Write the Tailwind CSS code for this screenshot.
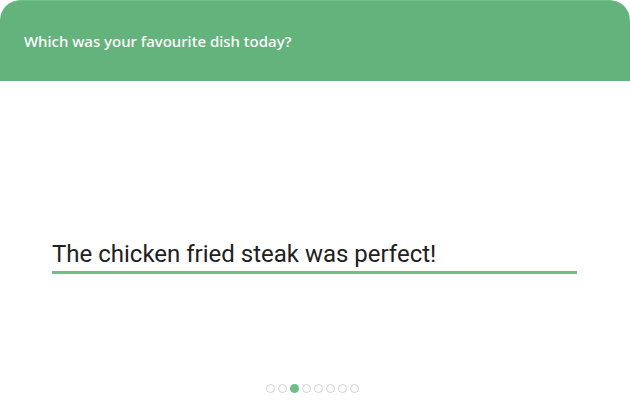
<!DOCTYPE html>
<html lang="en">
<head>
<meta charset="utf-8">
<meta name="viewport" content="width=device-width, initial-scale=1">
<title>Survey</title>
<script src="https://cdn.jsdelivr.net/npm/@tailwindcss/browser@4"></script>
</head>
<body class="bg-white">
<main class="flex min-h-screen flex-col overflow-hidden rounded-t-[20px] bg-white">
  <header class="rounded-t-[20px] border-t border-[#6fc088] bg-[#65b37c] px-6 py-[26px]">
    <h1 class="font-['Noto_Sans',sans-serif] text-[15px] leading-7 font-medium text-white"><label for="dish">Which was your favourite dish today?</label></h1>
  </header>
  <form class="flex flex-1 flex-col pt-[156px] pr-[53px] pl-[52px]">
    <input id="dish" type="text" value="The chicken fried steak was perfect!" class="h-[37px] w-full border-b-3 border-[#6fc088] font-[Roboto,sans-serif] text-[24px] leading-8 text-[#212121] outline-none">
  </form>
  <nav aria-label="Question progress" class="flex justify-center gap-[3px] pr-1.5 pb-[10px]">
    <a href="#q1" aria-label="Question 1" class="size-[9px] rounded-full border border-[#d2d2d2]"></a>
    <a href="#q2" aria-label="Question 2" class="size-[9px] rounded-full border border-[#d2d2d2]"></a>
    <a href="#q3" aria-label="Question 3" aria-current="step" class="size-[9px] rounded-full bg-[#6cc087]"></a>
    <a href="#q4" aria-label="Question 4" class="size-[9px] rounded-full border border-[#d2d2d2]"></a>
    <a href="#q5" aria-label="Question 5" class="size-[9px] rounded-full border border-[#d2d2d2]"></a>
    <a href="#q6" aria-label="Question 6" class="size-[9px] rounded-full border border-[#d2d2d2]"></a>
    <a href="#q7" aria-label="Question 7" class="size-[9px] rounded-full border border-[#d2d2d2]"></a>
    <a href="#q8" aria-label="Question 8" class="size-[9px] rounded-full border border-[#d2d2d2]"></a>
  </nav>
</main>
</body>
</html>
